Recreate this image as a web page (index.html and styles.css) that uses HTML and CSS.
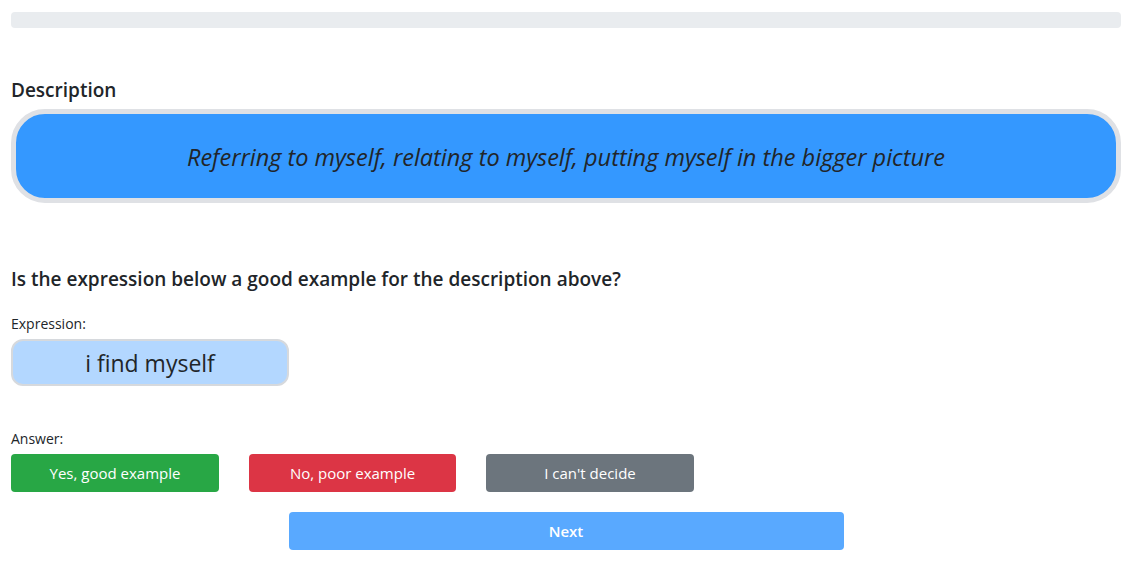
FILE: index.html
```html
<!DOCTYPE html>
<html lang="en">
<head>
<meta charset="utf-8">
<title>Rating</title>
<link rel="stylesheet" href="styles.css">
</head>
<body>
<div class="container">
  <div class="progress"><div class="progress-bar" style="width:0%"></div></div>

  <h5 class="section-title">Description</h5>
  <div class="description">
    <p class="description-text">Referring to myself, relating to myself, putting myself in the bigger picture</p>
  </div>

  <h5 class="question">Is the expression below a good example for the description above?</h5>

  <div class="label">Expression:</div>
  <div class="expression">i find myself</div>

  <div class="label answer-label">Answer:</div>
  <div class="answers">
    <button class="btn btn-success">Yes, good example</button>
    <button class="btn btn-danger">No, poor example</button>
    <button class="btn btn-secondary">I can't decide</button>
  </div>

  <div class="next-row">
    <button class="btn btn-next" disabled>Next</button>
  </div>
</div>
</body>
</html>
```
FILE: styles.css
```css
* { box-sizing: border-box; }
html, body { margin: 0; padding: 0; background: #fff; }
body {
  font-family: "Open Sans", "Noto Sans", sans-serif;
  color: #212529;
  font-size: 15px;
}
.container {
  padding: 12px 12px 0 11px;
}
.progress {
  height: 16px;
  background: #e9ecef;
  border-radius: 4px;
  overflow: hidden;
}
.progress-bar { height: 100%; background: #007bff; }

.section-title {
  margin: 50px 0 0;
  font-size: 19px;
  font-weight: 600;
  line-height: 24px;
}
.description {
  margin-top: 7px;
  height: 94px;
  border: 5px solid #dfe1e5;
  border-radius: 34px;
  background: #3498ff;
  display: flex;
  align-items: center;
  justify-content: center;
}
.description-text {
  margin: 0;
  padding-top: 2px;
  font-style: italic;
  font-size: 23.5px;
  color: #212529;
}
.question {
  margin: 64px 0 0;
  font-size: 19px;
  font-weight: 600;
  line-height: 24px;
}
.label {
  margin-top: 23px;
  font-size: 14px;
  line-height: 20px;
  color: #212529;
}
.expression {
  margin-top: 5px;
  width: 278px;
  height: 47px;
  background: #b3d7ff;
  border: 2px solid #d6d9dd;
  border-radius: 12px;
  display: flex;
  align-items: center;
  justify-content: center;
  font-size: 23px;
}
.answer-label { margin-top: 43px; }
.answers {
  margin-top: 5px;
  display: flex;
  gap: 30px;
}
.btn {
  font-family: inherit;
  width: 208px;
  height: 38px;
  border: 0;
  border-radius: 4px;
  color: #fff;
  font-size: 15px;
  padding: 0;
}
.btn-success { background: #28a745; }
.btn-danger { background: #dc3545; width: 207px; }
.btn-secondary { background: #6c757d; }
.next-row {
  margin-top: 20px;
  display: flex;
  justify-content: center;
}
.btn-next {
  width: 555px;
  background: #59a9ff;
  font-weight: 600;
}
```
